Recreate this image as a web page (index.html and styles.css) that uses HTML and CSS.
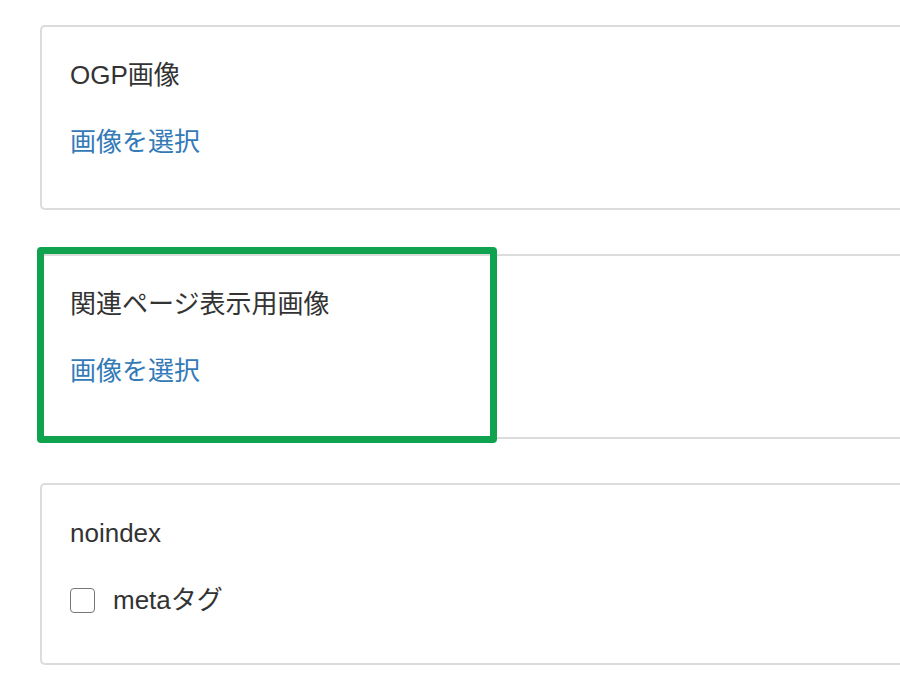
FILE: index.html
```html
<!DOCTYPE html>
<html lang="ja">
<head>
<meta charset="utf-8">
<link rel="stylesheet" href="styles.css">
</head>
<body>
<div class="page">
  <div class="card">
    <div class="card-title">OGP画像</div>
    <a class="card-link" href="#">画像を選択</a>
  </div>
  <div class="card card-highlighted">
    <div class="card-title">関連ページ表示用画像</div>
    <a class="card-link" href="#">画像を選択</a>
    <div class="highlight"></div>
  </div>
  <div class="card card-check">
    <div class="card-title">noindex</div>
    <label class="check-row">
      <input type="checkbox" class="check-box">
      <span class="check-label">metaタグ</span>
    </label>
  </div>
</div>
</body>
</html>
```

FILE: styles.css
```css
html, body {
  margin: 0;
  padding: 0;
  background: #ffffff;
}

body {
  font-family: "Liberation Sans", "Noto Sans CJK JP", sans-serif;
  color: #333333;
}

.page {
  display: flex;
  flex-direction: column;
  gap: 44px;
  padding: 25px 0 0 40px;
}

.card {
  position: relative;
  border: 2px solid #dcdcdc;
  border-right: none;
  border-radius: 5px 0 0 5px;
  padding: 30px 0 47px 28px;
  display: flex;
  flex-direction: column;
  align-items: flex-start;
  gap: 30px;
}

.card-title {
  font-size: 26px;
  line-height: 37px;
  color: #333333;
}

.card-link {
  font-size: 26px;
  line-height: 37px;
  color: #337ab7;
  text-decoration: none;
}

.highlight {
  position: absolute;
  left: -5px;
  top: -9px;
  width: 460px;
  height: 196px;
  box-sizing: border-box;
  border: 7px solid #0fa34f;
  border-radius: 4px;
  pointer-events: none;
}

.card-check {
  padding-bottom: 44px;
}

.check-row {
  display: flex;
  align-items: center;
  gap: 18px;
  height: 37px;
}

.check-box {
  appearance: none;
  -webkit-appearance: none;
  width: 25px;
  height: 25px;
  margin: 0;
  border: 1.5px solid #767676;
  border-radius: 4px;
  background: #ffffff;
  box-sizing: border-box;
}

.check-label {
  font-size: 26px;
  line-height: 37px;
  color: #333333;
}
```
